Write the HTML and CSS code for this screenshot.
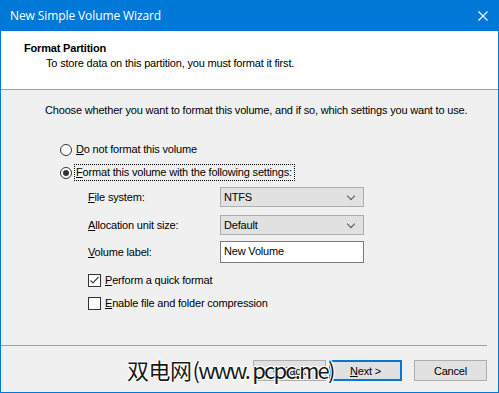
FILE: index.html
```html
<!DOCTYPE html>
<html lang="en">
<head>
  <meta charset="UTF-8">
  <title>New Simple Volume Wizard</title>
  <link rel="stylesheet" href="styles.css">
</head>
<body>
  <div class="window">
    <div class="titlebar">
      <span class="title">New Simple Volume Wizard</span>
      <svg class="close" width="10" height="10" viewBox="0 0 10 10">
        <path d="M0.5 0.5 L9.5 9.5 M9.5 0.5 L0.5 9.5" stroke="#fff" stroke-width="1.1"/>
      </svg>
    </div>

    <div class="header">
      <h1>Format Partition</h1>
      <p>To store data on this partition, you must format it first.</p>
    </div>

    <div class="content">
      <p class="intro">Choose whether you want to format this volume, and if so, which settings you want to use.</p>

      <div class="options">
        <label class="radio-row">
          <span class="radio"></span>
          <span><u>D</u>o not format this volume</span>
        </label>
        <label class="radio-row">
          <span class="radio checked"></span>
          <span class="focus"><u>F</u>ormat this volume with the following settings:</span>
        </label>

        <div class="settings">
          <span class="field-label"><u>F</u>ile system:</span>
          <div class="combo">NTFS<span class="chevron"></span></div>

          <span class="field-label"><u>A</u>llocation unit size:</span>
          <div class="combo">Default<span class="chevron"></span></div>

          <span class="field-label label-last"><u>V</u>olume label:</span>
          <div class="textbox">New Volume</div>
        </div>

        <div class="checks">
          <label class="check-row">
            <span class="checkbox checked">
              <svg width="11" height="11" viewBox="0 0 11 11"><path d="M1.5 5.5 L4 8 L9.5 2" fill="none" stroke="#444" stroke-width="1.2"/></svg>
            </span>
            <span><u>P</u>erform a quick format</span>
          </label>
          <label class="check-row">
            <span class="checkbox"></span>
            <span><u>E</u>nable file and folder compression</span>
          </label>
        </div>
      </div>
    </div>

    <div class="separator"></div>

    <div class="footer">
      <button class="button">&lt; <u>B</u>ack</button>
      <button class="button default"><u>N</u>ext &gt;</button>
      <button class="button cancel">Cancel</button>
      <div class="watermark">双电网<span class="latin">(www. pcpc.me)</span></div>
    </div>
  </div>
</body>
</html>
```

FILE: styles.css
```css
:root {
  --accent: #0078D7;
  --face: #F0F0F0;
  --button: #E1E1E1;
  --button-border: #ADADAD;
  --line: #A0A0A0;
  --text: #000000;
}

body {
  margin: 0;
  font-family: 'Liberation Sans', Arial, sans-serif;
  font-size: 11px;
  letter-spacing: -0.18px;
  color: var(--text);
}

.window {
  width: 499px;
  height: 393px;
  box-sizing: border-box;
  border: 1px solid var(--accent);
  border-top: none;
  background-color: var(--face);
  display: flex;
  flex-direction: column;
}

.titlebar {
  height: 31px;
  margin: 0 -1px;
  background-color: var(--accent);
  color: #fff;
  display: flex;
  align-items: center;
  justify-content: space-between;
  padding: 0 11px 0 10px;
  flex-shrink: 0;
}

.title {
  font-family: 'Open Sans', sans-serif;
  font-size: 12px;
  letter-spacing: -0.1px;
  padding-bottom: 1px;
}

.close {
  display: block;
}

.header {
  background-color: #fff;
  height: 59px;
  box-sizing: border-box;
  border-bottom: 1px solid var(--line);
  padding: 11px 0 0 23px;
  flex-shrink: 0;
}

.header h1 {
  margin: 0;
  font-size: 11px;
  font-weight: bold;
  line-height: 13px;
}

.header p {
  margin: 2px 0 0 22px;
  line-height: 13px;
}

.content {
  flex: 1;
  padding: 14px 0 0 44px;
}

.intro {
  margin: 0;
  line-height: 13px;
}

.options {
  margin: 26px 0 0 15px;
  display: flex;
  flex-direction: column;
}

.radio-row,
.check-row {
  display: flex;
  align-items: center;
  gap: 4px;
  line-height: 13px;
  height: 13px;
}

.radio-row + .radio-row {
  margin-top: 10px;
}

.radio {
  width: 12px;
  height: 12px;
  border: 1px solid #333;
  border-radius: 50%;
  background-color: #fff;
  box-sizing: border-box;
  position: relative;
}

.radio.checked::after {
  content: "";
  position: absolute;
  left: 2px;
  top: 2px;
  width: 6px;
  height: 6px;
  border-radius: 50%;
  background-color: #333;
}

.focus {
  outline: 1px dotted #000;
  outline-offset: 1px;
  padding-right: 1px;
}

.settings {
  margin: 8px 0 0 28px;
  display: grid;
  grid-template-columns: 132px 144px;
  row-gap: 8px;
  align-items: center;
}

.settings .label-last,
.settings .textbox {
  margin-top: -2px;
}

.combo {
  height: 20px;
  box-sizing: border-box;
  border: 1px solid var(--button-border);
  background-color: var(--button);
  padding: 0 0 0 3px;
  display: flex;
  align-items: center;
  justify-content: space-between;
  line-height: 18px;
}

.chevron {
  width: 5px;
  height: 5px;
  border-right: 1px solid #555;
  border-bottom: 1px solid #555;
  transform: rotate(45deg);
  margin: 0 9px 3px 0;
}

.textbox {
  height: 22px;
  box-sizing: border-box;
  border: 1px solid #7A7A7A;
  background-color: #fff;
  padding: 0 3px;
  line-height: 18px;
}

.checks {
  margin: 11px 0 0 28px;
  display: flex;
  flex-direction: column;
  gap: 10px;
}

.checkbox {
  width: 13px;
  height: 13px;
  box-sizing: border-box;
  border: 1px solid #333;
  background-color: #fff;
  display: flex;
  align-items: center;
  justify-content: center;
}

.checkbox svg {
  display: block;
}

.separator {
  height: 1px;
  margin-right: 11px;
  background-color: var(--line);
  flex-shrink: 0;
}

.footer {
  height: 46px;
  flex-shrink: 0;
  box-sizing: border-box;
  display: flex;
  align-items: flex-start;
  justify-content: flex-end;
  padding: 14px 11px 0 0;
  position: relative;
}

.button {
  width: 73px;
  height: 21px;
  box-sizing: border-box;
  border: 1px solid var(--button-border);
  background-color: var(--button);
  font-family: inherit;
  font-size: 11px;
  letter-spacing: inherit;
  padding: 0;
  color: var(--text);
}

.button + .button {
  margin-left: 3px;
}

.button.default {
  border: 2px solid var(--accent);
}

.button.cancel {
  margin-left: 12px;
}

.watermark {
  position: absolute;
  left: 126px;
  top: 9px;
  font-family: 'Noto Sans CJK SC', sans-serif;
  font-size: 22px;
  line-height: 28px;
  color: #1a1a1a;
  white-space: nowrap;
  letter-spacing: -0.5px;
  text-shadow: 1px 1px 0 #fff, -1px -1px 0 #fff, 1px -1px 0 #fff, -1px 1px 0 #fff;
}

.watermark .latin {
  letter-spacing: -1.8px;
  margin-left: 1px;
}
```
